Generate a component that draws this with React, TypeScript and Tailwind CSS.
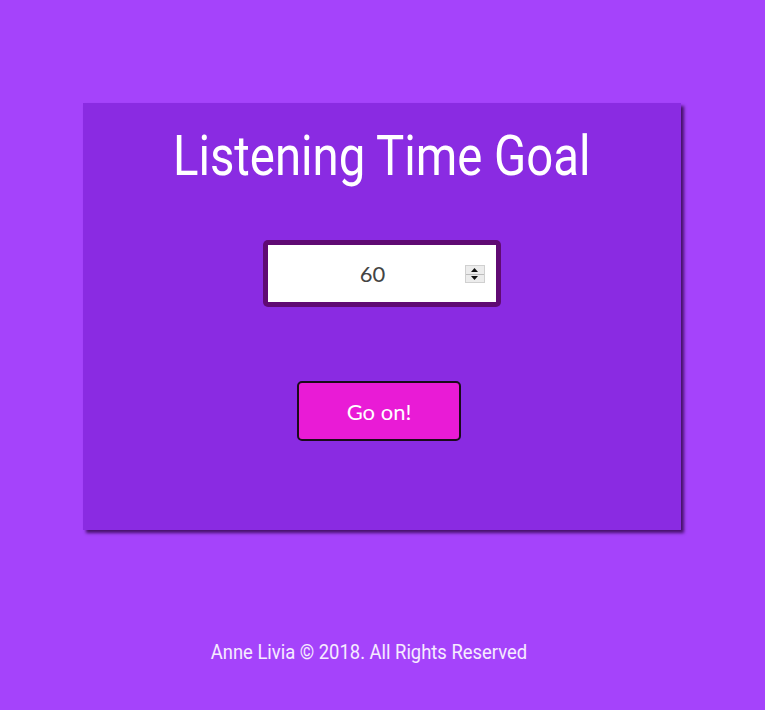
import React from "react";

export default function App() {
  return (
    <div className="min-h-[710px] w-full bg-[#a543fb] pt-[103px] flex flex-col items-center">
      <div className="w-[598px] h-[427px] ml-[-2px] bg-[#8a2be2] shadow-[3px_3px_3px_rgba(40,0,60,0.75)] flex flex-col items-center">
        <h1
          className="mt-[21px] h-[64px] text-white text-[55px] leading-[64px] whitespace-nowrap scale-x-[0.86]"
          style={{ fontFamily: 'Roboto, "DejaVu Sans Condensed", sans-serif' }}
        >
          Listening Time Goal
        </h1>
        <div className="mt-[52px] w-[238px] h-[67px] rounded-[5px] bg-[#600a73] p-[5px]">
          <div className="relative w-full h-full bg-white flex items-center justify-center">
            <span
              className="text-[22px] text-[#444] ml-[-18px]"
              style={{ fontFamily: 'Lato, "Open Sans", sans-serif' }}
            >
              60
            </span>
            <div className="absolute left-[197px] top-[20px] w-[20px] h-[18px] bg-[#ececec] border border-[#d0d0d0] flex flex-col">
              <div className="flex-1 flex items-center justify-center border-b border-[#bdbdbd]">
                <svg width="7" height="4" viewBox="0 0 7 4"><path d="M3.5 0 L7 4 L0 4 Z" fill="#111" /></svg>
              </div>
              <div className="flex-1 flex items-center justify-center">
                <svg width="7" height="4" viewBox="0 0 7 4"><path d="M0 0 L7 0 L3.5 4 Z" fill="#111" /></svg>
              </div>
            </div>
          </div>
        </div>
        <button
          className="mt-[74px] ml-[-5px] w-[164px] h-[60px] rounded-[5px] bg-[#e91bd6] border-2 border-[#1a0a1a] text-white text-[22px]"
          style={{ fontFamily: 'Lato, "Open Sans", sans-serif' }}
        >
          Go on!
        </button>
      </div>
      <p
        className="mt-[107px] ml-[-28px] text-white/90 text-[20px] whitespace-nowrap scale-x-[0.92]"
        style={{ fontFamily: 'Roboto, "DejaVu Sans Condensed", sans-serif' }}
      >
        Anne Livia © 2018. All Rights Reserved
      </p>
    </div>
  );
}
